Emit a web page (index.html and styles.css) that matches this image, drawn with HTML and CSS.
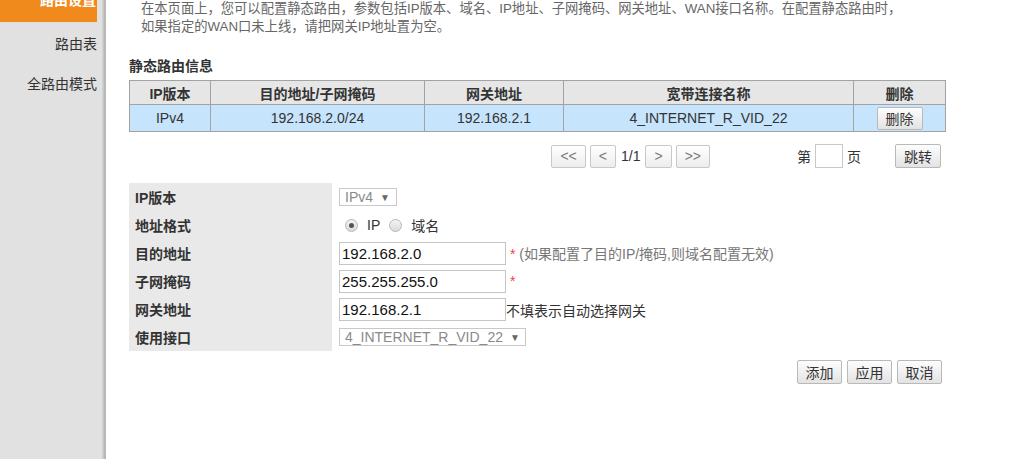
FILE: index.html
```html
<!DOCTYPE html>
<html lang="zh-CN">
<head>
    <meta charset="UTF-8">
    <meta name="viewport" content="width=device-width, initial-scale=1.0">
    <title>静态路由</title>
    <link rel="stylesheet" href="styles.css">
</head>
<body>
    <div id="page">
        <div id="menu">
            <div class="menu-item active">路由设置</div>
            <div class="menu-item">路由表</div>
            <div class="menu-item">全路由模式</div>
        </div>
        <div id="menu-shadow"></div>

        <div id="content">
            <p class="desc">在本页面上，您可以配置静态路由，参数包括IP版本、域名、IP地址、子网掩码、网关地址、WAN接口名称。在配置静态路由时，<br>如果指定的WAN口未上线，请把网关IP地址置为空。</p>

            <div class="section-title">静态路由信息</div>
            <table class="route-list">
                <colgroup>
                    <col style="width: 81px">
                    <col style="width: 214px">
                    <col style="width: 139px">
                    <col style="width: 290px">
                    <col style="width: 92px">
                </colgroup>
                <tr class="head-row">
                    <th>IP版本</th>
                    <th>目的地址/子网掩码</th>
                    <th>网关地址</th>
                    <th>宽带连接名称</th>
                    <th>删除</th>
                </tr>
                <tr class="data-row selected">
                    <td>IPv4</td>
                    <td>192.168.2.0/24</td>
                    <td>192.168.2.1</td>
                    <td>4_INTERNET_R_VID_22</td>
                    <td><button class="btn btn-del">删除</button></td>
                </tr>
            </table>

            <div class="pager">
                <button class="btn btn-page">&lt;&lt;</button>
                <button class="btn btn-page">&lt;</button>
                <span class="page-num">1/1</span>
                <button class="btn btn-page">&gt;</button>
                <button class="btn btn-page">&gt;&gt;</button>
                <span class="jump-label">第</span>
                <input type="text" class="page-input">
                <span class="jump-suffix">页</span>
                <button class="btn btn-jump">跳转</button>
            </div>

            <table class="route-form">
                <tr>
                    <th>IP版本</th>
                    <td><div class="select select-small"><span>IPv4</span><span class="arrow">▼</span></div></td>
                </tr>
                <tr>
                    <th>地址格式</th>
                    <td>
                        <div class="radio-group">
                            <span class="radio checked"></span><span class="radio-text">IP</span>
                            <span class="radio"></span><span class="radio-text">域名</span>
                        </div>
                    </td>
                </tr>
                <tr>
                    <th>目的地址</th>
                    <td><input type="text" class="field" value="192.168.2.0"><span class="hint"><span class="req">*</span> (如果配置了目的IP/掩码,则域名配置无效)</span></td>
                </tr>
                <tr>
                    <th>子网掩码</th>
                    <td><input type="text" class="field" value="255.255.255.0"><span class="hint"><span class="req">*</span></span></td>
                </tr>
                <tr>
                    <th>网关地址</th>
                    <td><input type="text" class="field" value="192.168.2.1"><span class="note">不填表示自动选择网关</span></td>
                </tr>
                <tr>
                    <th>使用接口</th>
                    <td><div class="select select-wide"><span>4_INTERNET_R_VID_22</span><span class="arrow">▼</span></div></td>
                </tr>
            </table>

            <div class="actions">
                <button class="btn btn-action">添加</button>
                <button class="btn btn-action">应用</button>
                <button class="btn btn-action">取消</button>
            </div>
        </div>
    </div>
</body>
</html>
```

FILE: styles.css
```css
body {
    margin: 0;
    font-family: "Liberation Sans", "Noto Sans CJK SC", sans-serif;
    font-size: 14px;
    color: #333333;
    background-color: #ffffff;
}

#page {
    display: flex;
    height: 459px;
    overflow: hidden;
}

#menu {
    width: 102px;
    background-color: #e1e1e1;
}

.menu-item {
    height: 40px;
    line-height: 40px;
    text-align: right;
    padding-right: 5px;
    color: #333333;
}

.menu-item.active {
    margin-top: -22px;
    margin-right: 5px;
    margin-bottom: 2px;
    height: 44px;
    line-height: 44px;
    padding-right: 1px;
    background-color: #f08a1d;
    color: #ffffff;
    font-weight: bold;
}

#menu-shadow {
    width: 4px;
    background: linear-gradient(to right, #d6d6d6, #c2c2c2 50%, #adadad 80%, #c8c8c8);
}

#content {
    flex: 1;
    padding-left: 23px;
}

.desc {
    margin: 0 0 21px 12px;
    font-size: 13.3px;
    line-height: 18px;
    color: #666666;
}

.section-title {
    font-weight: bold;
    line-height: 18px;
    margin-bottom: 5px;
}

.route-list {
    border-collapse: collapse;
    table-layout: fixed;
    width: 816px;
}

.route-list th,
.route-list td {
    border: 1px solid #a3a3a3;
    text-align: center;
    padding: 0;
    color: #333333;
}

.head-row {
    height: 24px;
    background-color: #e6e6e6;
}

.data-row {
    height: 27px;
}

.data-row.selected {
    background-color: #c6e4fb;
}

.btn {
    font-family: inherit;
    font-size: 14px;
    color: #333333;
    background: linear-gradient(#fdfdfd, #e3e3e3);
    border: 1px solid #b9b9b9;
    border-radius: 2px;
    padding: 0;
    cursor: pointer;
}

.btn-del {
    width: 46px;
    height: 23px;
    vertical-align: middle;
}

.pager {
    width: 816px;
    display: flex;
    justify-content: flex-end;
    align-items: center;
    margin-top: 12px;
    height: 24px;
}

.btn-page {
    height: 23px;
    padding: 0 8px;
    margin-left: 4px;
    color: #7a7a7a;
    background: linear-gradient(#ffffff, #ededed);
    border-color: #c8c8c8;
}

.page-num {
    margin: 0 1px 0 5px;
    color: #333333;
}

.jump-label {
    margin-left: 87px;
}

.page-input {
    width: 28px;
    height: 24px;
    box-sizing: border-box;
    margin: 0 4px;
    border: 1px solid #c8c8c8;
    outline: none;
}

.btn-jump {
    width: 46px;
    height: 24px;
    margin-left: 34px;
    margin-right: 4px;
}

.route-form {
    border-collapse: collapse;
    margin-top: 15px;
}

.route-form tr {
    height: 28px;
}

.route-form th {
    width: 197px;
    padding: 0 0 0 6px;
    text-align: left;
    background-color: #e9e9e9;
    font-weight: bold;
    color: #333333;
}

.route-form td {
    padding: 0 0 0 7px;
    white-space: nowrap;
}

.select {
    display: inline-flex;
    align-items: center;
    height: 18px;
    box-sizing: border-box;
    border: 1px solid #c8c8c8;
    padding: 0 6px 0 5px;
    color: #8a8a8a;
    vertical-align: middle;
}

.select .arrow {
    font-size: 10px;
    color: #666666;
    margin-left: 7px;
}

.select-wide {
    padding-right: 5px;
}

.radio-group {
    display: flex;
    align-items: center;
    padding-left: 6px;
}

.radio {
    width: 11px;
    height: 11px;
    border: 1px solid #b8b8b8;
    border-radius: 50%;
    background: linear-gradient(#f4f4f4, #dadada);
    display: flex;
    align-items: center;
    justify-content: center;
}

.radio.checked::after {
    content: "";
    width: 5px;
    height: 5px;
    border-radius: 50%;
    background-color: #555555;
}

.radio-text {
    margin: 0 9px 0 9px;
    color: #333333;
}

.field {
    width: 167px;
    height: 23px;
    box-sizing: border-box;
    border: 1px solid #c5c5c5;
    padding: 0 2px;
    font-family: inherit;
    font-size: 15px;
    color: #111111;
    outline: none;
    vertical-align: middle;
}

.hint {
    margin-left: 4px;
    color: #777777;
    vertical-align: middle;
}

.req {
    color: #e84545;
}

.note {
    color: #333333;
    vertical-align: middle;
}

.actions {
    width: 816px;
    display: flex;
    justify-content: flex-end;
    gap: 5px;
    margin-top: 9px;
}

.btn-action {
    width: 45px;
    height: 24px;
}

.actions .btn-action:last-child {
    margin-right: 3px;
}
```
